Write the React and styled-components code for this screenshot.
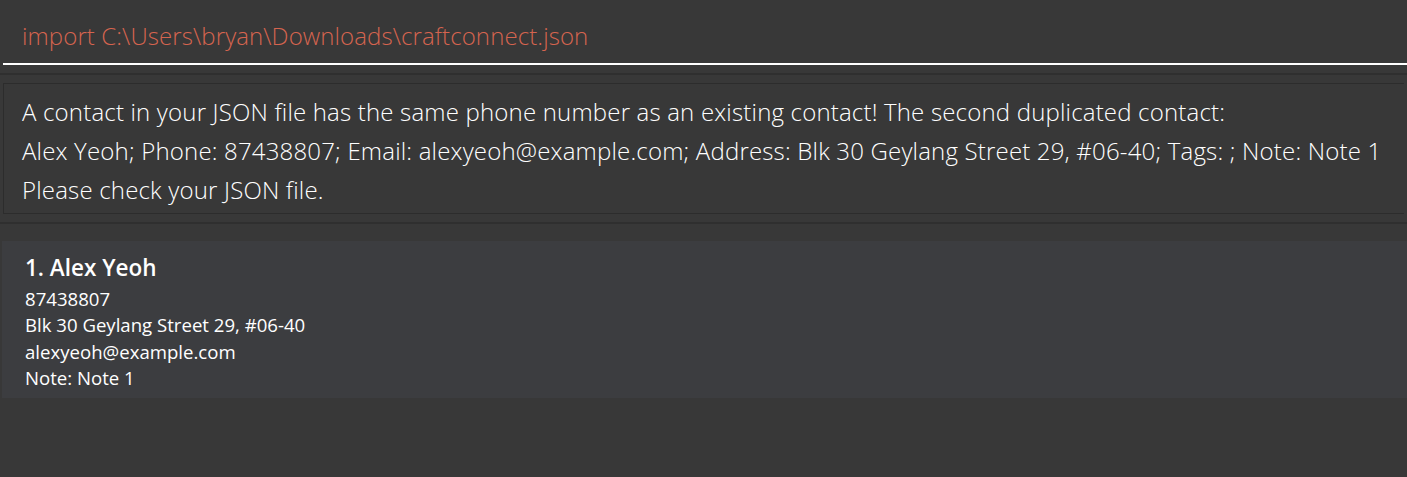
import React from "react";
import styled, { createGlobalStyle } from "styled-components";

const Global = createGlobalStyle`
  html, body { margin: 0; padding: 0; background: #383838; }
  body { font-family: "Open Sans", "Segoe UI", sans-serif; }
  * { box-sizing: border-box; }
`;

const Page = styled.div`
  width: 1407px;
  height: 477px;
  background: #383838;
  display: flex;
  flex-direction: column;
  overflow: hidden;
`;

const CommandBar = styled.div`
  height: 65px;
  padding: 0 0 0 3px;
  display: flex;
  flex-direction: column;
`;

const CommandInput = styled.div`
  flex: 1;
  display: flex;
  align-items: center;
  padding: 8px 0 0 19px;
  border-bottom: 2px solid #ffffff;
  color: #d5644f;
  font-size: 24px;
  font-weight: 300;
  letter-spacing: 0.1px;
`;

const Divider = styled.div`
  height: ${(p) => p.$h || 2}px;
  background: #2f2f2f;
  margin-top: ${(p) => p.$mt || 0}px;
`;

const ResultBox = styled.div`
  margin: 8px 3px 0 3px;
  border: 1px solid #2c2c2c;
  border-right: none;
  height: 131px;
  padding: 8px 0 0 18px;
  color: #ffffff;
  font-size: 24px;
  font-weight: 300;
  line-height: 39px;
  letter-spacing: 0.18px;
`;

const ListArea = styled.div`
  flex: 1;
  padding: 17px 0 0 2px;
`;

const Card = styled.div`
  background: #3c3d40;
  height: 157px;
  padding: 12px 0 0 23px;
  color: #ffffff;
`;

const Name = styled.div`
  font-size: 22.5px;
  font-weight: 600;
  line-height: 30px;
  margin-bottom: 3px;
`;

const Detail = styled.div`
  font-size: 18.6px;
  line-height: 26.3px;
`;

export default function App() {
  return (
    <Page>
      <Global />
      <CommandBar>
        <CommandInput>import C:\Users\bryan\Downloads\craftconnect.json</CommandInput>
      </CommandBar>
      <Divider $mt={8} />
      <ResultBox>
        <div>A contact in your JSON file has the same phone number as an existing contact! The second duplicated contact:</div>
        <div>Alex Yeoh; Phone: 87438807; Email: alexyeoh@example.com; Address: Blk 30 Geylang Street 29, #06-40; Tags: ; Note: Note 1</div>
        <div>Please check your JSON file.</div>
      </ResultBox>
      <Divider $mt={8} />
      <ListArea>
        <Card>
          <Name>1. Alex Yeoh</Name>
          <Detail>87438807</Detail>
          <Detail>Blk 30 Geylang Street 29, #06-40</Detail>
          <Detail>alexyeoh@example.com</Detail>
          <Detail>Note: Note 1</Detail>
        </Card>
      </ListArea>
    </Page>
  );
}
